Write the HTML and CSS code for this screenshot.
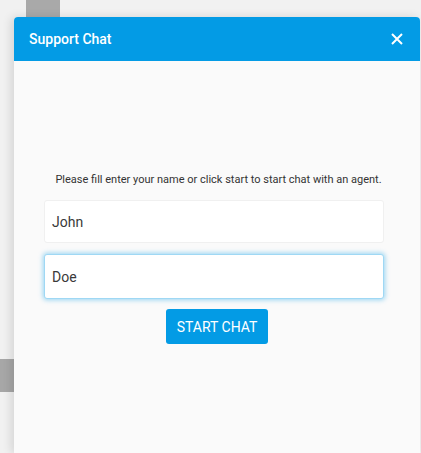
FILE: index.html
```html
<!DOCTYPE html>
<html lang="en">
<head>
    <meta charset="UTF-8">
    <meta name="viewport" content="width=device-width, initial-scale=1.0">
    <title>Support Chat</title>
    <link rel="stylesheet" href="styles.css">
</head>
<body>

    <div class="top-strip">
        <div class="tab"></div>
    </div>

    <div class="row">
        <div class="side">
            <div class="side-block"></div>
        </div>

        <div class="panel">
            <div class="panel-header">
                <span class="panel-title">Support Chat</span>
                <button class="close-btn" aria-label="Close">
                    <svg width="12" height="12" viewBox="0 0 12 12">
                        <path d="M1 1 L11 11 M11 1 L1 11" stroke="#fff" stroke-width="2" fill="none"/>
                    </svg>
                </button>
            </div>

            <div class="panel-body">
                <p class="intro">Please fill enter your name or click start to start chat with an agent.</p>
                <div class="form">
                    <input type="text" class="field" value="John">
                    <input type="text" class="field focused" value="Doe">
                    <button class="start-btn">START CHAT</button>
                </div>
            </div>
        </div>
    </div>

</body>
</html>
```

FILE: styles.css
```css
* {
    box-sizing: border-box;
    margin: 0;
    padding: 0;
}

body {
    font-family: Roboto, 'Liberation Sans', sans-serif;
    background: #f1f1f1;
    height: 453px;
    overflow: hidden;
}

.top-strip {
    height: 17px;
}

.tab {
    margin-left: 26px;
    width: 34px;
    height: 17px;
    background: #a9a9a9;
}

.row {
    display: flex;
}

.side {
    width: 14px;
    padding-top: 342px;
}

.side-block {
    height: 33px;
    background: #a7a7a7;
}

.panel {
    flex: 1;
    margin-right: 1px;
    height: 436px;
    background: #fafafa;
    border-radius: 4px 4px 0 0;
    box-shadow: -3px 0 10px rgba(0, 0, 0, 0.12);
}

.panel-header {
    height: 44px;
    background: #039be5;
    border-radius: 4px 4px 0 0;
    display: flex;
    align-items: center;
    justify-content: space-between;
    padding: 0 17px 0 15px;
}

.panel-title {
    color: #fff;
    font-size: 14px;
    font-weight: 500;
}

.close-btn {
    background: none;
    border: none;
    display: flex;
    align-items: center;
    cursor: pointer;
}

.panel-body {
    padding-top: 112px;
}

.intro {
    text-align: center;
    font-size: 11px;
    color: #333;
    padding-left: 3px;
}

.form {
    width: 340px;
    margin: 14px 0 0 30px;
    display: flex;
    flex-direction: column;
    align-items: center;
}

.field {
    width: 100%;
    height: 43px;
    padding: 0 7px;
    font-family: Roboto, sans-serif;
    font-size: 14px;
    color: #3a3a3a;
    background: #fff;
    border: 1px solid #f0f0f0;
    border-radius: 3px;
    outline: none;
}

.field.focused {
    margin-top: 11px;
    height: 45px;
    border: 1px solid #9fd8f4;
    box-shadow: 0 0 5px 1px rgba(3, 155, 229, 0.4);
}

.start-btn {
    margin: 10px 0 0 6px;
    width: 102px;
    height: 35px;
    background: #039be5;
    color: #fff;
    border: none;
    border-radius: 3px;
    font-family: Roboto, sans-serif;
    font-size: 14px;
    font-weight: 400;
    cursor: pointer;
}
```
